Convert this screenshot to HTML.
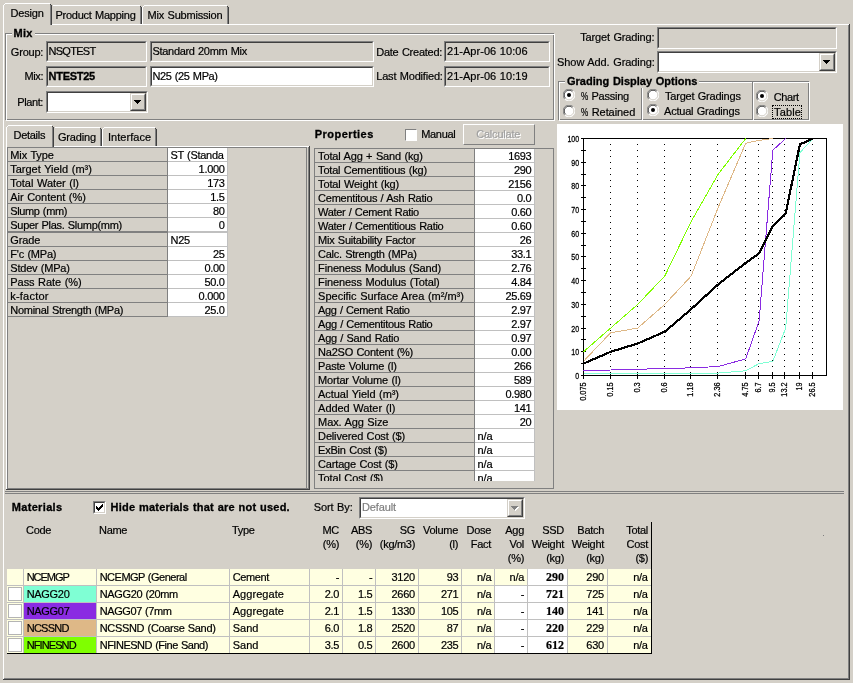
<!DOCTYPE html>
<html><head><meta charset="utf-8"><title>Mix Design</title>
<style>
html,body{margin:0;padding:0;}
body{width:853px;height:683px;overflow:hidden;background:#d4d0c8;position:relative;
 font-family:"Liberation Sans",Arial,sans-serif;font-size:11px;color:#000;}
div,svg{position:absolute;box-sizing:border-box;}
.t{-webkit-text-stroke:0.2px;white-space:nowrap;line-height:13px;height:13px;letter-spacing:-0.3px;word-spacing:0.6px;}
.b{font-weight:bold;letter-spacing:0.25px;-webkit-text-stroke:0.3px;}
.l{}
.sunk{border:1px solid;border-color:#808080 #fff #fff #808080;}
.sunk:before{content:"";position:absolute;left:0;top:0;right:0;bottom:0;border:1px solid;border-color:#404040 #d4d0c8 #d4d0c8 #404040;}
.btn{background:#d4d0c8;border:1px solid;border-color:#d4d0c8 #404040 #404040 #d4d0c8;}
.btn:before{content:"";position:absolute;left:0;top:0;right:0;bottom:0;border:1px solid;border-color:#fff #808080 #808080 #fff;}
.tab{background:#d4d0c8;}
.ser{font-family:"Liberation Serif",serif;font-weight:bold;font-size:12px;letter-spacing:0;}
.dis{color:#808080;}
svg text{stroke:#000;stroke-width:0.25px;}
#root{left:0;top:0;width:853px;height:683px;will-change:transform;}
</style></head><body><div id="root">

<div class="l" style="left:3px;top:24px;width:846px;height:1px;background:#fff;"></div>
<div class="l" style="left:3px;top:24px;width:1px;height:655px;background:#fff;"></div>
<div class="l" style="left:848px;top:25px;width:1px;height:654px;background:#808080;"></div>
<div class="l" style="left:849px;top:24px;width:1px;height:656px;background:#404040;"></div>
<div class="l" style="left:4px;top:678px;width:845px;height:1px;background:#808080;"></div>
<div class="l" style="left:3px;top:679px;width:847px;height:1px;background:#404040;"></div>
<div class="tab" style="left:52px;top:5px;width:90px;height:19px;"></div>
<div class="l" style="left:53px;top:5px;width:87px;height:1px;background:#fff;"></div>
<div class="l" style="left:140px;top:7px;width:1px;height:17px;background:#808080;"></div>
<div class="l" style="left:141px;top:7px;width:1px;height:17px;background:#404040;"></div>
<div class="l" style="left:140px;top:6px;width:1px;height:1px;background:#404040"></div>
<div class="t " style="left:55.4px;top:9px;letter-spacing:-0.24px;">Product Mapping</div>
<div class="tab" style="left:142px;top:5px;width:87px;height:19px;"></div>
<div class="l" style="left:142px;top:7px;width:1px;height:17px;background:#fff;"></div>
<div class="l" style="left:143px;top:6px;width:1px;height:1px;background:#fff"></div>
<div class="l" style="left:144px;top:5px;width:83px;height:1px;background:#fff;"></div>
<div class="l" style="left:227px;top:7px;width:1px;height:17px;background:#808080;"></div>
<div class="l" style="left:228px;top:7px;width:1px;height:17px;background:#404040;"></div>
<div class="l" style="left:227px;top:6px;width:1px;height:1px;background:#404040"></div>
<div class="t " style="left:147.6px;top:9px;letter-spacing:-0.20px;">Mix Submission</div>
<div class="tab" style="left:3px;top:3px;width:49px;height:22px;"></div>
<div class="l" style="left:3px;top:5px;width:1px;height:20px;background:#fff;"></div>
<div class="l" style="left:4px;top:4px;width:1px;height:1px;background:#fff"></div>
<div class="l" style="left:5px;top:3px;width:45px;height:1px;background:#fff;"></div>
<div class="l" style="left:50px;top:5px;width:1px;height:20px;background:#808080;"></div>
<div class="l" style="left:51px;top:5px;width:1px;height:20px;background:#404040;"></div>
<div class="l" style="left:50px;top:4px;width:1px;height:1px;background:#404040"></div>
<div class="t " style="left:10.5px;top:7px;letter-spacing:-0.16px;">Design</div>
<div class="l" style="left:5px;top:33px;width:549px;height:87px;border:1px solid #808080;box-sizing:border-box;"></div>
<div class="l" style="left:6px;top:34px;width:549px;height:87px;border:1px solid #fff;box-sizing:border-box;border-right-color:#fff;border-bottom-color:#fff;"></div>
<div class="l" style="left:12px;top:28px;width:23px;height:13px;background:#d4d0c8;"></div>
<div class="t b" style="left:13.5px;top:27px;letter-spacing:0.32px;">Mix</div>
<div class="t " style="right:809.8px;top:46px;letter-spacing:-0.21px;">Group:</div>
<div class="sunk" style="left:46px;top:41px;width:101px;height:21px;background:#d4d0c8;"></div>
<div class="t " style="left:48.5px;top:45px;letter-spacing:-0.72px;">NSQTEST</div>
<div class="sunk" style="left:150px;top:41px;width:224px;height:21px;background:#d4d0c8;"></div>
<div class="t " style="left:152.5px;top:45px;letter-spacing:-0.31px;">Standard 20mm Mix</div>
<div class="t " style="right:809.8px;top:70px;letter-spacing:-0.34px;">Mix:</div>
<div class="sunk" style="left:46px;top:66px;width:101px;height:21px;background:#d4d0c8;"></div>
<div class="t b" style="left:48.5px;top:70px;letter-spacing:-0.26px;">NTEST25</div>
<div class="sunk" style="left:150px;top:66px;width:224px;height:21px;background:#fff;"></div>
<div class="t " style="left:152.5px;top:70px;letter-spacing:-0.38px;">N25 (25 MPa)</div>
<div class="t " style="right:810px;top:96px;letter-spacing:-0.39px;">Plant:</div>
<div class="sunk" style="left:46px;top:91px;width:102px;height:22px;background:#fff;"></div>
<div class="btn" style="left:130px;top:93px;width:16px;height:18px;"></div>
<svg class="l" style="left:134px;top:100px" width="7" height="4" viewBox="0 0 7 4"><path d="M0 0h7l-3.5 4z" fill="#000" shape-rendering="crispEdges"/></svg>
<div class="t " style="left:376.2px;top:46px;letter-spacing:-0.24px;">Date Created:</div>
<div class="sunk" style="left:444px;top:41px;width:106px;height:21px;background:#d4d0c8;"></div>
<div class="t " style="left:447px;top:45px;letter-spacing:0.03px;">21-Apr-06 10:06</div>
<div class="t " style="left:376.2px;top:70px;letter-spacing:-0.18px;">Last Modified:</div>
<div class="sunk" style="left:444px;top:66px;width:106px;height:21px;background:#d4d0c8;"></div>
<div class="t " style="left:447px;top:70px;letter-spacing:0.03px;">21-Apr-06 10:19</div>
<div class="t " style="right:198.5px;top:31px;letter-spacing:-0.14px;">Target Grading:</div>
<div class="sunk" style="left:657px;top:27px;width:180px;height:22px;background:#d4d0c8;"></div>
<div class="t " style="right:198.20000000000005px;top:56px;letter-spacing:-0.07px;">Show Add. Grading:</div>
<div class="sunk" style="left:657px;top:51px;width:180px;height:22px;background:#fff;"></div>
<div class="btn" style="left:819px;top:53px;width:16px;height:18px;"></div>
<svg class="l" style="left:823px;top:60px" width="7" height="4" viewBox="0 0 7 4"><path d="M0 0h7l-3.5 4z" fill="#000" shape-rendering="crispEdges"/></svg>
<div class="l" style="left:558px;top:81px;width:251px;height:39px;border:1px solid #808080;box-sizing:border-box;"></div>
<div class="l" style="left:559px;top:82px;width:251px;height:39px;border:1px solid #fff;box-sizing:border-box;border-right-color:#fff;border-bottom-color:#fff;"></div>
<div class="l" style="left:565px;top:75px;width:134px;height:13px;background:#d4d0c8;"></div>
<div class="t b" style="left:567px;top:75px;letter-spacing:0.01px;">Grading Display Options</div>
<div class="l" style="left:641px;top:88px;width:1px;height:32px;background:#808080;"></div>
<div class="l" style="left:642px;top:88px;width:1px;height:32px;background:#fff;"></div>
<div class="l" style="left:752px;top:82px;width:1px;height:38px;background:#808080;"></div>
<div class="l" style="left:753px;top:82px;width:1px;height:38px;background:#fff;"></div>
<svg class="l" style="left:563px;top:89px" width="12" height="12" viewBox="0 0 12 12"><circle cx="6" cy="6" r="5.5" fill="#fff"/><path d="M1.8 10.2 A5.9 5.9 0 0 1 10.2 1.8" fill="none" stroke="#808080" stroke-width="1"/><path d="M2.6 9.4 A4.8 4.8 0 0 1 9.4 2.6" fill="none" stroke="#404040" stroke-width="1"/><path d="M10.2 1.8 A5.9 5.9 0 0 1 1.8 10.2" fill="none" stroke="#fff" stroke-width="1"/><path d="M9.4 2.6 A4.8 4.8 0 0 1 2.6 9.4" fill="none" stroke="#d4d0c8" stroke-width="1"/><circle cx="6" cy="6" r="2" fill="#000"/></svg>
<div class="t " style="left:580.6px;top:90px;letter-spacing:-0.22px;"><span style="display:inline-block;transform:scaleX(0.74);transform-origin:0 50%;margin-right:-2.2px">%</span> Passing</div>
<svg class="l" style="left:563px;top:105px" width="12" height="12" viewBox="0 0 12 12"><circle cx="6" cy="6" r="5.5" fill="#fff"/><path d="M1.8 10.2 A5.9 5.9 0 0 1 10.2 1.8" fill="none" stroke="#808080" stroke-width="1"/><path d="M2.6 9.4 A4.8 4.8 0 0 1 9.4 2.6" fill="none" stroke="#404040" stroke-width="1"/><path d="M10.2 1.8 A5.9 5.9 0 0 1 1.8 10.2" fill="none" stroke="#fff" stroke-width="1"/><path d="M9.4 2.6 A4.8 4.8 0 0 1 2.6 9.4" fill="none" stroke="#d4d0c8" stroke-width="1"/></svg>
<div class="t " style="left:580.6px;top:106px;letter-spacing:-0.07px;"><span style="display:inline-block;transform:scaleX(0.74);transform-origin:0 50%;margin-right:-2.2px">%</span> Retained</div>
<svg class="l" style="left:647px;top:89px" width="12" height="12" viewBox="0 0 12 12"><circle cx="6" cy="6" r="5.5" fill="#fff"/><path d="M1.8 10.2 A5.9 5.9 0 0 1 10.2 1.8" fill="none" stroke="#808080" stroke-width="1"/><path d="M2.6 9.4 A4.8 4.8 0 0 1 9.4 2.6" fill="none" stroke="#404040" stroke-width="1"/><path d="M10.2 1.8 A5.9 5.9 0 0 1 1.8 10.2" fill="none" stroke="#fff" stroke-width="1"/><path d="M9.4 2.6 A4.8 4.8 0 0 1 2.6 9.4" fill="none" stroke="#d4d0c8" stroke-width="1"/></svg>
<div class="t " style="left:665px;top:90px;letter-spacing:-0.21px;">Target Gradings</div>
<svg class="l" style="left:647px;top:104px" width="12" height="12" viewBox="0 0 12 12"><circle cx="6" cy="6" r="5.5" fill="#fff"/><path d="M1.8 10.2 A5.9 5.9 0 0 1 10.2 1.8" fill="none" stroke="#808080" stroke-width="1"/><path d="M2.6 9.4 A4.8 4.8 0 0 1 9.4 2.6" fill="none" stroke="#404040" stroke-width="1"/><path d="M10.2 1.8 A5.9 5.9 0 0 1 1.8 10.2" fill="none" stroke="#fff" stroke-width="1"/><path d="M9.4 2.6 A4.8 4.8 0 0 1 2.6 9.4" fill="none" stroke="#d4d0c8" stroke-width="1"/><circle cx="6" cy="6" r="2" fill="#000"/></svg>
<div class="t " style="left:664px;top:105px;letter-spacing:-0.21px;">Actual Gradings</div>
<svg class="l" style="left:756px;top:90px" width="12" height="12" viewBox="0 0 12 12"><circle cx="6" cy="6" r="5.5" fill="#fff"/><path d="M1.8 10.2 A5.9 5.9 0 0 1 10.2 1.8" fill="none" stroke="#808080" stroke-width="1"/><path d="M2.6 9.4 A4.8 4.8 0 0 1 9.4 2.6" fill="none" stroke="#404040" stroke-width="1"/><path d="M10.2 1.8 A5.9 5.9 0 0 1 1.8 10.2" fill="none" stroke="#fff" stroke-width="1"/><path d="M9.4 2.6 A4.8 4.8 0 0 1 2.6 9.4" fill="none" stroke="#d4d0c8" stroke-width="1"/><circle cx="6" cy="6" r="2" fill="#000"/></svg>
<div class="t " style="left:773.7px;top:91px;letter-spacing:-0.36px;">Chart</div>
<svg class="l" style="left:756px;top:105px" width="12" height="12" viewBox="0 0 12 12"><circle cx="6" cy="6" r="5.5" fill="#fff"/><path d="M1.8 10.2 A5.9 5.9 0 0 1 10.2 1.8" fill="none" stroke="#808080" stroke-width="1"/><path d="M2.6 9.4 A4.8 4.8 0 0 1 9.4 2.6" fill="none" stroke="#404040" stroke-width="1"/><path d="M10.2 1.8 A5.9 5.9 0 0 1 1.8 10.2" fill="none" stroke="#fff" stroke-width="1"/><path d="M9.4 2.6 A4.8 4.8 0 0 1 2.6 9.4" fill="none" stroke="#d4d0c8" stroke-width="1"/></svg>
<div class="t " style="left:774px;top:106px;letter-spacing:0.16px;">Table</div>
<div class="l" style="left:772px;top:105px;width:30px;height:14px;border:1px dotted #000;"></div>
<div class="tab" style="left:54px;top:127px;width:48px;height:19px;"></div>
<div class="l" style="left:55px;top:127px;width:45px;height:1px;background:#fff;"></div>
<div class="l" style="left:100px;top:129px;width:1px;height:17px;background:#808080;"></div>
<div class="l" style="left:101px;top:129px;width:1px;height:17px;background:#404040;"></div>
<div class="l" style="left:100px;top:128px;width:1px;height:1px;background:#404040"></div>
<div class="t " style="left:58px;top:131px;letter-spacing:-0.19px;">Grading</div>
<div class="tab" style="left:102px;top:127px;width:55px;height:19px;"></div>
<div class="l" style="left:102px;top:129px;width:1px;height:17px;background:#fff;"></div>
<div class="l" style="left:103px;top:128px;width:1px;height:1px;background:#fff"></div>
<div class="l" style="left:104px;top:127px;width:51px;height:1px;background:#fff;"></div>
<div class="l" style="left:155px;top:129px;width:1px;height:17px;background:#808080;"></div>
<div class="l" style="left:156px;top:129px;width:1px;height:17px;background:#404040;"></div>
<div class="l" style="left:155px;top:128px;width:1px;height:1px;background:#404040"></div>
<div class="t " style="left:108px;top:131px;letter-spacing:0.03px;">Interface</div>
<div class="l" style="left:6px;top:146px;width:303px;height:1px;background:#fff;"></div>
<div class="l" style="left:6px;top:146px;width:1px;height:343px;background:#fff;"></div>
<div class="l" style="left:308px;top:147px;width:1px;height:342px;background:#808080;"></div>
<div class="l" style="left:309px;top:146px;width:1px;height:344px;background:#404040;"></div>
<div class="l" style="left:7px;top:488px;width:302px;height:1px;background:#808080;"></div>
<div class="l" style="left:6px;top:489px;width:304px;height:1px;background:#404040;"></div>
<div class="tab" style="left:6px;top:125px;width:48px;height:22px;"></div>
<div class="l" style="left:6px;top:127px;width:1px;height:20px;background:#fff;"></div>
<div class="l" style="left:7px;top:126px;width:1px;height:1px;background:#fff"></div>
<div class="l" style="left:8px;top:125px;width:44px;height:1px;background:#fff;"></div>
<div class="l" style="left:52px;top:127px;width:1px;height:20px;background:#808080;"></div>
<div class="l" style="left:53px;top:127px;width:1px;height:20px;background:#404040;"></div>
<div class="l" style="left:52px;top:126px;width:1px;height:1px;background:#404040"></div>
<div class="t " style="left:13.5px;top:129px;letter-spacing:-0.28px;">Details</div>
<div class="l" style="left:7px;top:147px;width:300px;height:342px;border:1px solid #808080;"></div>
<div class="l" style="left:8px;top:148px;width:220px;height:169px;background:#808080;"></div>
<div class="l" style="left:8px;top:148px;width:159px;height:13px;background:#d4d0c8;"></div>
<div class="l" style="left:168px;top:148px;width:59px;height:13px;background:#fff;"></div>
<div class="l" style="left:168px;top:161px;width:59px;height:1px;background:#c0c0c0;"></div>
<div class="t " style="left:10.3px;top:149px;letter-spacing:-0.12px;">Mix Type</div>
<div class="t " style="left:170.5px;top:149px;width:56px;overflow:hidden;">ST (Standa</div>
<div class="l" style="left:8px;top:162px;width:159px;height:13px;background:#d4d0c8;"></div>
<div class="l" style="left:168px;top:162px;width:59px;height:13px;background:#fff;"></div>
<div class="l" style="left:168px;top:175px;width:59px;height:1px;background:#c0c0c0;"></div>
<div class="t " style="left:10.3px;top:163px;letter-spacing:-0.02px;">Target Yield (m³)</div>
<div class="t " style="right:628.4px;top:163px;">1.000</div>
<div class="l" style="left:8px;top:176px;width:159px;height:13px;background:#d4d0c8;"></div>
<div class="l" style="left:168px;top:176px;width:59px;height:13px;background:#fff;"></div>
<div class="l" style="left:168px;top:189px;width:59px;height:1px;background:#c0c0c0;"></div>
<div class="t " style="left:10.3px;top:177px;letter-spacing:-0.04px;">Total Water (l)</div>
<div class="t " style="right:628.4px;top:177px;">173</div>
<div class="l" style="left:8px;top:190px;width:159px;height:13px;background:#d4d0c8;"></div>
<div class="l" style="left:168px;top:190px;width:59px;height:13px;background:#fff;"></div>
<div class="l" style="left:168px;top:203px;width:59px;height:1px;background:#c0c0c0;"></div>
<div class="t " style="left:10.3px;top:191px;letter-spacing:-0.06px;">Air Content (%)</div>
<div class="t " style="right:628.4px;top:191px;">1.5</div>
<div class="l" style="left:8px;top:204px;width:159px;height:13px;background:#d4d0c8;"></div>
<div class="l" style="left:168px;top:204px;width:59px;height:13px;background:#fff;"></div>
<div class="l" style="left:168px;top:217px;width:59px;height:1px;background:#c0c0c0;"></div>
<div class="t " style="left:10.3px;top:205px;letter-spacing:-0.38px;">Slump (mm)</div>
<div class="t " style="right:628.4px;top:205px;">80</div>
<div class="l" style="left:8px;top:218px;width:159px;height:13px;background:#d4d0c8;"></div>
<div class="l" style="left:168px;top:218px;width:59px;height:13px;background:#fff;"></div>
<div class="l" style="left:168px;top:231px;width:59px;height:1px;background:#c0c0c0;"></div>
<div class="l" style="left:168px;top:232px;width:59px;height:1px;background:#c0c0c0;"></div>
<div class="t " style="left:10.3px;top:219px;letter-spacing:-0.30px;">Super Plas. Slump(mm)</div>
<div class="t " style="right:628.4px;top:219px;">0</div>
<div class="l" style="left:8px;top:233px;width:159px;height:13px;background:#d4d0c8;"></div>
<div class="l" style="left:168px;top:233px;width:59px;height:13px;background:#fff;"></div>
<div class="l" style="left:168px;top:246px;width:59px;height:1px;background:#c0c0c0;"></div>
<div class="t " style="left:10.3px;top:234px;letter-spacing:-0.12px;">Grade</div>
<div class="t " style="left:170.5px;top:234px;width:56px;overflow:hidden;">N25</div>
<div class="l" style="left:8px;top:247px;width:159px;height:13px;background:#d4d0c8;"></div>
<div class="l" style="left:168px;top:247px;width:59px;height:13px;background:#fff;"></div>
<div class="l" style="left:168px;top:260px;width:59px;height:1px;background:#c0c0c0;"></div>
<div class="t " style="left:10.3px;top:248px;letter-spacing:-0.22px;">F'c (MPa)</div>
<div class="t " style="right:628.4px;top:248px;">25</div>
<div class="l" style="left:8px;top:261px;width:159px;height:13px;background:#d4d0c8;"></div>
<div class="l" style="left:168px;top:261px;width:59px;height:13px;background:#fff;"></div>
<div class="l" style="left:168px;top:274px;width:59px;height:1px;background:#c0c0c0;"></div>
<div class="t " style="left:10.3px;top:262px;letter-spacing:-0.21px;">Stdev (MPa)</div>
<div class="t " style="right:628.4px;top:262px;">0.00</div>
<div class="l" style="left:8px;top:275px;width:159px;height:13px;background:#d4d0c8;"></div>
<div class="l" style="left:168px;top:275px;width:59px;height:13px;background:#fff;"></div>
<div class="l" style="left:168px;top:288px;width:59px;height:1px;background:#c0c0c0;"></div>
<div class="t " style="left:10.3px;top:276px;letter-spacing:-0.06px;">Pass Rate (%)</div>
<div class="t " style="right:628.4px;top:276px;">50.0</div>
<div class="l" style="left:8px;top:289px;width:159px;height:13px;background:#d4d0c8;"></div>
<div class="l" style="left:168px;top:289px;width:59px;height:13px;background:#fff;"></div>
<div class="l" style="left:168px;top:302px;width:59px;height:1px;background:#c0c0c0;"></div>
<div class="t " style="left:10.3px;top:290px;letter-spacing:0.20px;">k-factor</div>
<div class="t " style="right:628.4px;top:290px;">0.000</div>
<div class="l" style="left:8px;top:303px;width:159px;height:13px;background:#d4d0c8;"></div>
<div class="l" style="left:168px;top:303px;width:59px;height:13px;background:#fff;"></div>
<div class="l" style="left:168px;top:316px;width:59px;height:1px;background:#c0c0c0;"></div>
<div class="t " style="left:10.3px;top:304px;letter-spacing:-0.29px;">Nominal Strength (MPa)</div>
<div class="t " style="right:628.4px;top:304px;">25.0</div>
<div class="l" style="left:227px;top:148px;width:1px;height:169px;background:#c0c0c0;"></div>
<div class="t b" style="left:314.8px;top:128px;letter-spacing:0.45px;">Properties</div>
<div class="l" style="left:405px;top:129px;width:12px;height:12px;background:#fff;border:1px solid;border-color:#808080 #fff #fff #808080;"></div>
<div class="t " style="left:421.2px;top:128px;letter-spacing:-0.30px;">Manual</div>
<div class="l" style="left:463px;top:124px;width:72px;height:21px;border:1px solid;border-color:#fff #808080 #808080 #fff;"></div>
<div class="t " style="left:477.2px;top:129px;letter-spacing:-0.20px;color:#fff;">Calculate</div>
<div class="t " style="left:476.2px;top:128px;letter-spacing:-0.20px;color:#a0a0a0;">Calculate</div>
<div class="l" style="left:314px;top:148px;width:240px;height:341px;border:1px solid #808080;"></div>
<div class="l" style="left:315px;top:149px;width:220px;height:332px;overflow:hidden;">
<div class="l" style="left:0px;top:0px;width:220px;height:336px;background:#808080;"></div>
<div class="l" style="left:0px;top:0px;width:159px;height:13px;background:#d4d0c8;"></div>
<div class="l" style="left:160px;top:0px;width:59px;height:13px;background:#fff;"></div>
<div class="l" style="left:160px;top:13px;width:59px;height:1px;background:#c0c0c0;"></div>
<div class="t " style="left:3.1px;top:1px;letter-spacing:-0.15px;">Total Agg + Sand (kg)</div>
<div class="t" style="right:3.6px;top:1px;">1693</div>
<div class="l" style="left:0px;top:14px;width:159px;height:13px;background:#d4d0c8;"></div>
<div class="l" style="left:160px;top:14px;width:59px;height:13px;background:#fff;"></div>
<div class="l" style="left:160px;top:27px;width:59px;height:1px;background:#c0c0c0;"></div>
<div class="t " style="left:3.1px;top:15px;letter-spacing:-0.21px;">Total Cementitious (kg)</div>
<div class="t" style="right:3.6px;top:15px;">290</div>
<div class="l" style="left:0px;top:28px;width:159px;height:13px;background:#d4d0c8;"></div>
<div class="l" style="left:160px;top:28px;width:59px;height:13px;background:#fff;"></div>
<div class="l" style="left:160px;top:41px;width:59px;height:1px;background:#c0c0c0;"></div>
<div class="t " style="left:3.1px;top:29px;letter-spacing:-0.15px;">Total Weight (kg)</div>
<div class="t" style="right:3.6px;top:29px;">2156</div>
<div class="l" style="left:0px;top:42px;width:159px;height:13px;background:#d4d0c8;"></div>
<div class="l" style="left:160px;top:42px;width:59px;height:13px;background:#fff;"></div>
<div class="l" style="left:160px;top:55px;width:59px;height:1px;background:#c0c0c0;"></div>
<div class="t " style="left:3.1px;top:43px;letter-spacing:-0.24px;">Cementitous / Ash Ratio</div>
<div class="t" style="right:3.6px;top:43px;">0.0</div>
<div class="l" style="left:0px;top:56px;width:159px;height:13px;background:#d4d0c8;"></div>
<div class="l" style="left:160px;top:56px;width:59px;height:13px;background:#fff;"></div>
<div class="l" style="left:160px;top:69px;width:59px;height:1px;background:#c0c0c0;"></div>
<div class="t " style="left:3.1px;top:57px;letter-spacing:-0.32px;">Water / Cement Ratio</div>
<div class="t" style="right:3.6px;top:57px;">0.60</div>
<div class="l" style="left:0px;top:70px;width:159px;height:13px;background:#d4d0c8;"></div>
<div class="l" style="left:160px;top:70px;width:59px;height:13px;background:#fff;"></div>
<div class="l" style="left:160px;top:83px;width:59px;height:1px;background:#c0c0c0;"></div>
<div class="t " style="left:3.1px;top:71px;letter-spacing:-0.29px;">Water / Cementitious Ratio</div>
<div class="t" style="right:3.6px;top:71px;">0.60</div>
<div class="l" style="left:0px;top:84px;width:159px;height:13px;background:#d4d0c8;"></div>
<div class="l" style="left:160px;top:84px;width:59px;height:13px;background:#fff;"></div>
<div class="l" style="left:160px;top:97px;width:59px;height:1px;background:#c0c0c0;"></div>
<div class="t " style="left:3.1px;top:85px;letter-spacing:-0.26px;">Mix Suitability Factor</div>
<div class="t" style="right:3.6px;top:85px;">26</div>
<div class="l" style="left:0px;top:98px;width:159px;height:13px;background:#d4d0c8;"></div>
<div class="l" style="left:160px;top:98px;width:59px;height:13px;background:#fff;"></div>
<div class="l" style="left:160px;top:111px;width:59px;height:1px;background:#c0c0c0;"></div>
<div class="t " style="left:3.1px;top:99px;letter-spacing:-0.27px;">Calc. Strength (MPa)</div>
<div class="t" style="right:3.6px;top:99px;">33.1</div>
<div class="l" style="left:0px;top:112px;width:159px;height:13px;background:#d4d0c8;"></div>
<div class="l" style="left:160px;top:112px;width:59px;height:13px;background:#fff;"></div>
<div class="l" style="left:160px;top:125px;width:59px;height:1px;background:#c0c0c0;"></div>
<div class="t " style="left:3.1px;top:113px;letter-spacing:-0.16px;">Fineness Modulus (Sand)</div>
<div class="t" style="right:3.6px;top:113px;">2.76</div>
<div class="l" style="left:0px;top:126px;width:159px;height:13px;background:#d4d0c8;"></div>
<div class="l" style="left:160px;top:126px;width:59px;height:13px;background:#fff;"></div>
<div class="l" style="left:160px;top:139px;width:59px;height:1px;background:#c0c0c0;"></div>
<div class="t " style="left:3.1px;top:127px;letter-spacing:-0.11px;">Fineness Modulus (Total)</div>
<div class="t" style="right:3.6px;top:127px;">4.84</div>
<div class="l" style="left:0px;top:140px;width:159px;height:13px;background:#d4d0c8;"></div>
<div class="l" style="left:160px;top:140px;width:59px;height:13px;background:#fff;"></div>
<div class="l" style="left:160px;top:153px;width:59px;height:1px;background:#c0c0c0;"></div>
<div class="t " style="left:3.1px;top:141px;letter-spacing:-0.01px;">Specific Surface Area (m²/m³)</div>
<div class="t" style="right:3.6px;top:141px;">25.69</div>
<div class="l" style="left:0px;top:154px;width:159px;height:13px;background:#d4d0c8;"></div>
<div class="l" style="left:160px;top:154px;width:59px;height:13px;background:#fff;"></div>
<div class="l" style="left:160px;top:167px;width:59px;height:1px;background:#c0c0c0;"></div>
<div class="t " style="left:3.1px;top:155px;letter-spacing:-0.35px;">Agg / Cement Ratio</div>
<div class="t" style="right:3.6px;top:155px;">2.97</div>
<div class="l" style="left:0px;top:168px;width:159px;height:13px;background:#d4d0c8;"></div>
<div class="l" style="left:160px;top:168px;width:59px;height:13px;background:#fff;"></div>
<div class="l" style="left:160px;top:181px;width:59px;height:1px;background:#c0c0c0;"></div>
<div class="t " style="left:3.1px;top:169px;letter-spacing:-0.29px;">Agg / Cementitous Ratio</div>
<div class="t" style="right:3.6px;top:169px;">2.97</div>
<div class="l" style="left:0px;top:182px;width:159px;height:13px;background:#d4d0c8;"></div>
<div class="l" style="left:160px;top:182px;width:59px;height:13px;background:#fff;"></div>
<div class="l" style="left:160px;top:195px;width:59px;height:1px;background:#c0c0c0;"></div>
<div class="t " style="left:3.1px;top:183px;letter-spacing:-0.25px;">Agg / Sand Ratio</div>
<div class="t" style="right:3.6px;top:183px;">0.97</div>
<div class="l" style="left:0px;top:196px;width:159px;height:13px;background:#d4d0c8;"></div>
<div class="l" style="left:160px;top:196px;width:59px;height:13px;background:#fff;"></div>
<div class="l" style="left:160px;top:209px;width:59px;height:1px;background:#c0c0c0;"></div>
<div class="t " style="left:3.1px;top:197px;letter-spacing:-0.24px;">Na2SO Content (%)</div>
<div class="t" style="right:3.6px;top:197px;">0.00</div>
<div class="l" style="left:0px;top:210px;width:159px;height:13px;background:#d4d0c8;"></div>
<div class="l" style="left:160px;top:210px;width:59px;height:13px;background:#fff;"></div>
<div class="l" style="left:160px;top:223px;width:59px;height:1px;background:#c0c0c0;"></div>
<div class="t " style="left:3.1px;top:211px;letter-spacing:-0.20px;">Paste Volume (l)</div>
<div class="t" style="right:3.6px;top:211px;">266</div>
<div class="l" style="left:0px;top:224px;width:159px;height:13px;background:#d4d0c8;"></div>
<div class="l" style="left:160px;top:224px;width:59px;height:13px;background:#fff;"></div>
<div class="l" style="left:160px;top:237px;width:59px;height:1px;background:#c0c0c0;"></div>
<div class="t " style="left:3.1px;top:225px;letter-spacing:-0.17px;">Mortar Volume (l)</div>
<div class="t" style="right:3.6px;top:225px;">589</div>
<div class="l" style="left:0px;top:238px;width:159px;height:13px;background:#d4d0c8;"></div>
<div class="l" style="left:160px;top:238px;width:59px;height:13px;background:#fff;"></div>
<div class="l" style="left:160px;top:251px;width:59px;height:1px;background:#c0c0c0;"></div>
<div class="t " style="left:3.1px;top:239px;letter-spacing:-0.06px;">Actual Yield (m³)</div>
<div class="t" style="right:3.6px;top:239px;">0.980</div>
<div class="l" style="left:0px;top:252px;width:159px;height:13px;background:#d4d0c8;"></div>
<div class="l" style="left:160px;top:252px;width:59px;height:13px;background:#fff;"></div>
<div class="l" style="left:160px;top:265px;width:59px;height:1px;background:#c0c0c0;"></div>
<div class="t " style="left:3.1px;top:253px;letter-spacing:-0.04px;">Added Water (l)</div>
<div class="t" style="right:3.6px;top:253px;">141</div>
<div class="l" style="left:0px;top:266px;width:159px;height:13px;background:#d4d0c8;"></div>
<div class="l" style="left:160px;top:266px;width:59px;height:13px;background:#fff;"></div>
<div class="l" style="left:160px;top:279px;width:59px;height:1px;background:#c0c0c0;"></div>
<div class="t " style="left:3.1px;top:267px;letter-spacing:-0.10px;">Max. Agg Size</div>
<div class="t" style="right:3.6px;top:267px;">20</div>
<div class="l" style="left:0px;top:280px;width:159px;height:13px;background:#d4d0c8;"></div>
<div class="l" style="left:160px;top:280px;width:59px;height:13px;background:#fff;"></div>
<div class="l" style="left:160px;top:293px;width:59px;height:1px;background:#c0c0c0;"></div>
<div class="t " style="left:3.1px;top:281px;letter-spacing:-0.16px;">Delivered Cost ($)</div>
<div class="t " style="left:162.5px;top:281px;letter-spacing:-0.07px;">n/a</div>
<div class="l" style="left:0px;top:294px;width:159px;height:13px;background:#d4d0c8;"></div>
<div class="l" style="left:160px;top:294px;width:59px;height:13px;background:#fff;"></div>
<div class="l" style="left:160px;top:307px;width:59px;height:1px;background:#c0c0c0;"></div>
<div class="t " style="left:3.1px;top:295px;letter-spacing:-0.22px;">ExBin Cost ($)</div>
<div class="t " style="left:162.5px;top:295px;letter-spacing:-0.07px;">n/a</div>
<div class="l" style="left:0px;top:308px;width:159px;height:13px;background:#d4d0c8;"></div>
<div class="l" style="left:160px;top:308px;width:59px;height:13px;background:#fff;"></div>
<div class="l" style="left:160px;top:321px;width:59px;height:1px;background:#c0c0c0;"></div>
<div class="t " style="left:3.1px;top:309px;letter-spacing:-0.18px;">Cartage Cost ($)</div>
<div class="t " style="left:162.5px;top:309px;letter-spacing:-0.07px;">n/a</div>
<div class="l" style="left:0px;top:322px;width:159px;height:13px;background:#d4d0c8;"></div>
<div class="l" style="left:160px;top:322px;width:59px;height:13px;background:#fff;"></div>
<div class="l" style="left:160px;top:335px;width:59px;height:1px;background:#c0c0c0;"></div>
<div class="t " style="left:3.1px;top:323px;letter-spacing:-0.11px;">Total Cost ($)</div>
<div class="t " style="left:162.5px;top:323px;letter-spacing:-0.07px;">n/a</div>
<div class="l" style="left:219px;top:0px;width:1px;height:336px;background:#c0c0c0;"></div>
</div>
<div class="l" style="left:557px;top:124px;width:286px;height:286px;background:#fff;"></div>
<svg class="l" style="left:0;top:0" width="853" height="683" viewBox="0 0 853 683" font-family="Liberation Sans,Arial,sans-serif" font-size="8.4"><line x1="610.5" y1="144" x2="610.5" y2="375.5" stroke="#000" stroke-width="1" stroke-dasharray="1 5" shape-rendering="crispEdges"/><line x1="637.5" y1="144" x2="637.5" y2="375.5" stroke="#000" stroke-width="1" stroke-dasharray="1 5" shape-rendering="crispEdges"/><line x1="664.5" y1="144" x2="664.5" y2="375.5" stroke="#000" stroke-width="1" stroke-dasharray="1 5" shape-rendering="crispEdges"/><line x1="690.5" y1="144" x2="690.5" y2="375.5" stroke="#000" stroke-width="1" stroke-dasharray="1 5" shape-rendering="crispEdges"/><line x1="717.5" y1="144" x2="717.5" y2="375.5" stroke="#000" stroke-width="1" stroke-dasharray="1 5" shape-rendering="crispEdges"/><line x1="745.5" y1="144" x2="745.5" y2="375.5" stroke="#000" stroke-width="1" stroke-dasharray="1 5" shape-rendering="crispEdges"/><line x1="758.5" y1="144" x2="758.5" y2="375.5" stroke="#000" stroke-width="1" stroke-dasharray="1 5" shape-rendering="crispEdges"/><line x1="772.5" y1="144" x2="772.5" y2="375.5" stroke="#000" stroke-width="1" stroke-dasharray="1 5" shape-rendering="crispEdges"/><line x1="784.5" y1="144" x2="784.5" y2="375.5" stroke="#000" stroke-width="1" stroke-dasharray="1 5" shape-rendering="crispEdges"/><line x1="799.5" y1="144" x2="799.5" y2="375.5" stroke="#000" stroke-width="1" stroke-dasharray="1 5" shape-rendering="crispEdges"/><line x1="812.5" y1="144" x2="812.5" y2="375.5" stroke="#000" stroke-width="1" stroke-dasharray="1 5" shape-rendering="crispEdges"/><rect x="583.5" y="138.5" width="243.0" height="237.0" fill="none" stroke="#000" stroke-width="1" shape-rendering="crispEdges"/><line x1="580.5" y1="375.5" x2="585.5" y2="375.5" stroke="#000" shape-rendering="crispEdges"/><text transform="translate(579.2,378.7) scale(0.84,1)" text-anchor="end">0</text><line x1="580.5" y1="363.5" x2="585.5" y2="363.5" stroke="#000" shape-rendering="crispEdges"/><line x1="580.5" y1="351.5" x2="585.5" y2="351.5" stroke="#000" shape-rendering="crispEdges"/><text transform="translate(579.2,354.7) scale(0.84,1)" text-anchor="end">10</text><line x1="580.5" y1="339.5" x2="585.5" y2="339.5" stroke="#000" shape-rendering="crispEdges"/><line x1="580.5" y1="328.5" x2="585.5" y2="328.5" stroke="#000" shape-rendering="crispEdges"/><text transform="translate(579.2,331.7) scale(0.84,1)" text-anchor="end">20</text><line x1="580.5" y1="316.5" x2="585.5" y2="316.5" stroke="#000" shape-rendering="crispEdges"/><line x1="580.5" y1="304.5" x2="585.5" y2="304.5" stroke="#000" shape-rendering="crispEdges"/><text transform="translate(579.2,307.7) scale(0.84,1)" text-anchor="end">30</text><line x1="580.5" y1="292.5" x2="585.5" y2="292.5" stroke="#000" shape-rendering="crispEdges"/><line x1="580.5" y1="280.5" x2="585.5" y2="280.5" stroke="#000" shape-rendering="crispEdges"/><text transform="translate(579.2,283.7) scale(0.84,1)" text-anchor="end">40</text><line x1="580.5" y1="268.5" x2="585.5" y2="268.5" stroke="#000" shape-rendering="crispEdges"/><line x1="580.5" y1="256.5" x2="585.5" y2="256.5" stroke="#000" shape-rendering="crispEdges"/><text transform="translate(579.2,259.7) scale(0.84,1)" text-anchor="end">50</text><line x1="580.5" y1="245.5" x2="585.5" y2="245.5" stroke="#000" shape-rendering="crispEdges"/><line x1="580.5" y1="233.5" x2="585.5" y2="233.5" stroke="#000" shape-rendering="crispEdges"/><text transform="translate(579.2,236.7) scale(0.84,1)" text-anchor="end">60</text><line x1="580.5" y1="221.5" x2="585.5" y2="221.5" stroke="#000" shape-rendering="crispEdges"/><line x1="580.5" y1="209.5" x2="585.5" y2="209.5" stroke="#000" shape-rendering="crispEdges"/><text transform="translate(579.2,212.7) scale(0.84,1)" text-anchor="end">70</text><line x1="580.5" y1="197.5" x2="585.5" y2="197.5" stroke="#000" shape-rendering="crispEdges"/><line x1="580.5" y1="185.5" x2="585.5" y2="185.5" stroke="#000" shape-rendering="crispEdges"/><text transform="translate(579.2,188.7) scale(0.84,1)" text-anchor="end">80</text><line x1="580.5" y1="174.5" x2="585.5" y2="174.5" stroke="#000" shape-rendering="crispEdges"/><line x1="580.5" y1="162.5" x2="585.5" y2="162.5" stroke="#000" shape-rendering="crispEdges"/><text transform="translate(579.2,165.7) scale(0.84,1)" text-anchor="end">90</text><line x1="580.5" y1="150.5" x2="585.5" y2="150.5" stroke="#000" shape-rendering="crispEdges"/><line x1="580.5" y1="138.5" x2="585.5" y2="138.5" stroke="#000" shape-rendering="crispEdges"/><text transform="translate(579.2,141.7) scale(0.84,1)" text-anchor="end">100</text><line x1="583.5" y1="372.5" x2="583.5" y2="378.5" stroke="#000" shape-rendering="crispEdges"/><text transform="translate(586.4,382.3) rotate(-90) scale(0.88,1)" text-anchor="end">0.075</text><line x1="610.5" y1="372.5" x2="610.5" y2="378.5" stroke="#000" shape-rendering="crispEdges"/><text transform="translate(613.4,382.3) rotate(-90) scale(0.88,1)" text-anchor="end">0.15</text><line x1="637.5" y1="372.5" x2="637.5" y2="378.5" stroke="#000" shape-rendering="crispEdges"/><text transform="translate(640.4,382.3) rotate(-90) scale(0.88,1)" text-anchor="end">0.3</text><line x1="664.5" y1="372.5" x2="664.5" y2="378.5" stroke="#000" shape-rendering="crispEdges"/><text transform="translate(667.4,382.3) rotate(-90) scale(0.88,1)" text-anchor="end">0.6</text><line x1="690.5" y1="372.5" x2="690.5" y2="378.5" stroke="#000" shape-rendering="crispEdges"/><text transform="translate(693.4,382.3) rotate(-90) scale(0.88,1)" text-anchor="end">1.18</text><line x1="717.5" y1="372.5" x2="717.5" y2="378.5" stroke="#000" shape-rendering="crispEdges"/><text transform="translate(720.4,382.3) rotate(-90) scale(0.88,1)" text-anchor="end">2.36</text><line x1="745.5" y1="372.5" x2="745.5" y2="378.5" stroke="#000" shape-rendering="crispEdges"/><text transform="translate(748.4,382.3) rotate(-90) scale(0.88,1)" text-anchor="end">4.75</text><line x1="758.5" y1="372.5" x2="758.5" y2="378.5" stroke="#000" shape-rendering="crispEdges"/><text transform="translate(761.4,382.3) rotate(-90) scale(0.88,1)" text-anchor="end">6.7</text><line x1="772.5" y1="372.5" x2="772.5" y2="378.5" stroke="#000" shape-rendering="crispEdges"/><text transform="translate(775.4,382.3) rotate(-90) scale(0.88,1)" text-anchor="end">9.5</text><line x1="784.5" y1="372.5" x2="784.5" y2="378.5" stroke="#000" shape-rendering="crispEdges"/><text transform="translate(787.4,382.3) rotate(-90) scale(0.88,1)" text-anchor="end">13.2</text><line x1="799.5" y1="372.5" x2="799.5" y2="378.5" stroke="#000" shape-rendering="crispEdges"/><text transform="translate(802.4,382.3) rotate(-90) scale(0.88,1)" text-anchor="end">19</text><line x1="812.5" y1="372.5" x2="812.5" y2="378.5" stroke="#000" shape-rendering="crispEdges"/><text transform="translate(815.4,382.3) rotate(-90) scale(0.88,1)" text-anchor="end">26.5</text><polyline points="583.5,351.8 610.6,328.1 637.7,304.4 664.8,276.0 691.2,221.4 718.3,174.1 745.7,138.5" fill="none" stroke="#7fff00" stroke-width="1" stroke-linejoin="round" shape-rendering="crispEdges"/><polyline points="583.5,361.3 610.6,332.8 637.7,328.1 664.8,304.4 691.2,276.0 718.3,207.2 745.7,143.2 759.1,140.4 772.8,138.5" fill="none" stroke="#deb887" stroke-width="1" stroke-linejoin="round" shape-rendering="crispEdges"/><polyline points="583.5,370.8 610.6,370.0 637.7,369.3 664.8,368.4 691.2,367.9 718.3,366.5 745.7,358.9 759.1,321.0 772.8,150.3 785.7,138.5" fill="none" stroke="#8a2be2" stroke-width="1" stroke-linejoin="round" shape-rendering="crispEdges"/><polyline points="583.5,373.1 610.6,373.1 637.7,373.1 664.8,373.1 691.2,373.1 718.3,373.1 745.7,370.8 759.1,363.6 772.8,361.3 785.7,328.1 799.9,152.7 812.9,138.5" fill="none" stroke="#7fffd4" stroke-width="1" stroke-linejoin="round" shape-rendering="crispEdges"/><polyline points="583.5,363.6 610.6,351.8 637.7,343.5 664.8,331.7 691.2,309.1 718.3,284.3 745.7,262.9 759.1,253.4 772.8,226.2 785.7,213.2 799.9,144.4 812.9,138.5" fill="none" stroke="#000000" stroke-width="2.2" stroke-linejoin="round" shape-rendering="crispEdges"/></svg>
<div class="l" style="left:5px;top:491px;width:839px;height:1px;background:#808080;"></div>
<div class="l" style="left:5px;top:493px;width:839px;height:1px;background:#808080;"></div>
<div class="t b" style="left:11.7px;top:501px;letter-spacing:0.34px;">Materials</div>
<div class="sunk" style="left:93px;top:501px;width:13px;height:13px;background:#fff;"></div>
<svg class="l" style="left:96px;top:504px" width="7" height="7" viewBox="0 0 7 7"><path d="M0 2v3l2 2l5-5v-3l-5 5z" fill="#000" shape-rendering="crispEdges"/></svg>
<div class="t b" style="left:110.6px;top:501px;letter-spacing:0.19px;">Hide materials that are not used.</div>
<div class="t " style="left:313.7px;top:501px;letter-spacing:-0.10px;">Sort By:</div>
<div class="sunk" style="left:359px;top:497px;width:166px;height:22px;background:#fff;"></div>
<div class="t dis" style="left:362px;top:501px;letter-spacing:-0.14px;">Default</div>
<div class="btn" style="left:507px;top:499px;width:16px;height:18px;"></div>
<svg class="l" style="left:512px;top:507px" width="7" height="4" viewBox="0 0 7 4"><path d="M0 0h7l-3.5 4z" fill="#fff" shape-rendering="crispEdges"/></svg>
<svg class="l" style="left:511px;top:506px" width="7" height="4" viewBox="0 0 7 4"><path d="M0 0h7l-3.5 4z" fill="#808080" shape-rendering="crispEdges"/></svg>
<div class="t " style="left:26px;top:524px;">Code</div>
<div class="t " style="left:99px;top:524px;">Name</div>
<div class="t " style="left:232px;top:524px;">Type</div>
<div class="t " style="right:514px;top:524px;">MC</div>
<div class="t " style="right:514px;top:538px;">(%)</div>
<div class="t " style="right:481px;top:524px;">ABS</div>
<div class="t " style="right:481px;top:538px;">(%)</div>
<div class="t " style="right:438px;top:524px;">SG</div>
<div class="t " style="right:438px;top:538px;">(kg/m3)</div>
<div class="t " style="right:395px;top:524px;">Volume</div>
<div class="t " style="right:395px;top:538px;">(l)</div>
<div class="t " style="right:362px;top:524px;">Dose</div>
<div class="t " style="right:362px;top:538px;">Fact</div>
<div class="t " style="right:329px;top:524px;">Agg</div>
<div class="t " style="right:329px;top:538px;">Vol</div>
<div class="t " style="right:329px;top:552px;">(%)</div>
<div class="t " style="right:289px;top:524px;">SSD</div>
<div class="t " style="right:289px;top:538px;">Weight</div>
<div class="t " style="right:289px;top:552px;">(kg)</div>
<div class="t " style="right:249px;top:524px;">Batch</div>
<div class="t " style="right:249px;top:538px;">Weight</div>
<div class="t " style="right:249px;top:552px;">(kg)</div>
<div class="t " style="right:205px;top:524px;">Total</div>
<div class="t " style="right:205px;top:538px;">Cost</div>
<div class="t " style="right:205px;top:552px;">($)</div>
<div class="l" style="left:7px;top:569px;width:644px;height:85px;background:#c0c0c0;"></div>
<div class="l" style="left:7px;top:569px;width:16px;height:16px;background:#ffffe1;"></div>
<div class="l" style="left:24px;top:569px;width:72px;height:16px;background:#ffffe1;"></div>
<div class="t " style="left:26.7px;top:571px;letter-spacing:-1.05px;">NCEMGP</div>
<div class="l" style="left:97px;top:569px;width:132px;height:16px;background:#ffffe1;"></div>
<div class="t " style="left:99.7px;top:571px;letter-spacing:-0.51px;">NCEMGP (General</div>
<div class="l" style="left:230px;top:569px;width:79px;height:16px;background:#ffffe1;"></div>
<div class="t " style="left:232.7px;top:571px;letter-spacing:-0.37px;">Cement</div>
<div class="l" style="left:310px;top:569px;width:32px;height:16px;background:#ffffe1;"></div>
<div class="t " style="right:513.9px;top:571px;">-</div>
<div class="l" style="left:343px;top:569px;width:32px;height:16px;background:#ffffe1;"></div>
<div class="t " style="right:480.7px;top:571px;">-</div>
<div class="l" style="left:376px;top:569px;width:42px;height:16px;background:#ffffe1;"></div>
<div class="t " style="right:438.2px;top:571px;">3120</div>
<div class="l" style="left:419px;top:569px;width:42px;height:16px;background:#ffffe1;"></div>
<div class="t " style="right:394.6px;top:571px;">93</div>
<div class="l" style="left:462px;top:569px;width:32px;height:16px;background:#ffffe1;"></div>
<div class="t " style="right:361.7px;top:571px;">n/a</div>
<div class="l" style="left:495px;top:569px;width:32px;height:16px;background:#ffffe1;"></div>
<div class="t " style="right:329px;top:571px;">n/a</div>
<div class="l" style="left:528px;top:569px;width:39px;height:16px;background:#fff;"></div>
<div class="t ser" style="right:289px;top:571px;">290</div>
<div class="l" style="left:568px;top:569px;width:39px;height:16px;background:#ffffe1;"></div>
<div class="t " style="right:249.20000000000005px;top:571px;">290</div>
<div class="l" style="left:608px;top:569px;width:43px;height:16px;background:#ffffe1;"></div>
<div class="t " style="right:205.29999999999995px;top:571px;">n/a</div>
<div class="l" style="left:7px;top:586px;width:16px;height:16px;background:#ffffe1;"></div>
<div class="l" style="left:8px;top:587px;width:14px;height:14px;background:#fff;border:1px solid #b4b4b4;"></div>
<div class="l" style="left:24px;top:586px;width:72px;height:16px;background:#7fffd4;"></div>
<div class="t " style="left:26.7px;top:588px;letter-spacing:-0.31px;">NAGG20</div>
<div class="l" style="left:97px;top:586px;width:132px;height:16px;background:#ffffe1;"></div>
<div class="t " style="left:99.7px;top:588px;letter-spacing:-0.36px;">NAGG20 (20mm</div>
<div class="l" style="left:230px;top:586px;width:79px;height:16px;background:#ffffe1;"></div>
<div class="t " style="left:232.7px;top:588px;letter-spacing:0.06px;">Aggregate</div>
<div class="l" style="left:310px;top:586px;width:32px;height:16px;background:#ffffe1;"></div>
<div class="t " style="right:513.9px;top:588px;">2.0</div>
<div class="l" style="left:343px;top:586px;width:32px;height:16px;background:#ffffe1;"></div>
<div class="t " style="right:480.7px;top:588px;">1.5</div>
<div class="l" style="left:376px;top:586px;width:42px;height:16px;background:#ffffe1;"></div>
<div class="t " style="right:438.2px;top:588px;">2660</div>
<div class="l" style="left:419px;top:586px;width:42px;height:16px;background:#ffffe1;"></div>
<div class="t " style="right:394.6px;top:588px;">271</div>
<div class="l" style="left:462px;top:586px;width:32px;height:16px;background:#ffffe1;"></div>
<div class="t " style="right:361.7px;top:588px;">n/a</div>
<div class="l" style="left:495px;top:586px;width:32px;height:16px;background:#fff;"></div>
<div class="t " style="right:329px;top:588px;">-</div>
<div class="l" style="left:528px;top:586px;width:39px;height:16px;background:#fff;"></div>
<div class="t ser" style="right:289px;top:588px;">721</div>
<div class="l" style="left:568px;top:586px;width:39px;height:16px;background:#ffffe1;"></div>
<div class="t " style="right:249.20000000000005px;top:588px;">725</div>
<div class="l" style="left:608px;top:586px;width:43px;height:16px;background:#ffffe1;"></div>
<div class="t " style="right:205.29999999999995px;top:588px;">n/a</div>
<div class="l" style="left:7px;top:603px;width:16px;height:16px;background:#ffffe1;"></div>
<div class="l" style="left:8px;top:604px;width:14px;height:14px;background:#fff;border:1px solid #b4b4b4;"></div>
<div class="l" style="left:24px;top:603px;width:72px;height:16px;background:#8a2be2;"></div>
<div class="t " style="left:26.7px;top:605px;letter-spacing:-0.31px;">NAGG07</div>
<div class="l" style="left:97px;top:603px;width:132px;height:16px;background:#ffffe1;"></div>
<div class="t " style="left:99.7px;top:605px;letter-spacing:-0.41px;">NAGG07 (7mm</div>
<div class="l" style="left:230px;top:603px;width:79px;height:16px;background:#ffffe1;"></div>
<div class="t " style="left:232.7px;top:605px;letter-spacing:0.06px;">Aggregate</div>
<div class="l" style="left:310px;top:603px;width:32px;height:16px;background:#ffffe1;"></div>
<div class="t " style="right:513.9px;top:605px;">2.1</div>
<div class="l" style="left:343px;top:603px;width:32px;height:16px;background:#ffffe1;"></div>
<div class="t " style="right:480.7px;top:605px;">1.5</div>
<div class="l" style="left:376px;top:603px;width:42px;height:16px;background:#ffffe1;"></div>
<div class="t " style="right:438.2px;top:605px;">1330</div>
<div class="l" style="left:419px;top:603px;width:42px;height:16px;background:#ffffe1;"></div>
<div class="t " style="right:394.6px;top:605px;">105</div>
<div class="l" style="left:462px;top:603px;width:32px;height:16px;background:#ffffe1;"></div>
<div class="t " style="right:361.7px;top:605px;">n/a</div>
<div class="l" style="left:495px;top:603px;width:32px;height:16px;background:#fff;"></div>
<div class="t " style="right:329px;top:605px;">-</div>
<div class="l" style="left:528px;top:603px;width:39px;height:16px;background:#fff;"></div>
<div class="t ser" style="right:289px;top:605px;">140</div>
<div class="l" style="left:568px;top:603px;width:39px;height:16px;background:#ffffe1;"></div>
<div class="t " style="right:249.20000000000005px;top:605px;">141</div>
<div class="l" style="left:608px;top:603px;width:43px;height:16px;background:#ffffe1;"></div>
<div class="t " style="right:205.29999999999995px;top:605px;">n/a</div>
<div class="l" style="left:7px;top:620px;width:16px;height:16px;background:#ffffe1;"></div>
<div class="l" style="left:8px;top:621px;width:14px;height:14px;background:#fff;border:1px solid #b4b4b4;"></div>
<div class="l" style="left:24px;top:620px;width:72px;height:16px;background:#deb887;"></div>
<div class="t " style="left:26.7px;top:622px;letter-spacing:-0.74px;">NCSSND</div>
<div class="l" style="left:97px;top:620px;width:132px;height:16px;background:#ffffe1;"></div>
<div class="t " style="left:99.7px;top:622px;letter-spacing:-0.32px;">NCSSND (Coarse Sand)</div>
<div class="l" style="left:230px;top:620px;width:79px;height:16px;background:#ffffe1;"></div>
<div class="t " style="left:232.7px;top:622px;letter-spacing:0.02px;">Sand</div>
<div class="l" style="left:310px;top:620px;width:32px;height:16px;background:#ffffe1;"></div>
<div class="t " style="right:513.9px;top:622px;">6.0</div>
<div class="l" style="left:343px;top:620px;width:32px;height:16px;background:#ffffe1;"></div>
<div class="t " style="right:480.7px;top:622px;">1.8</div>
<div class="l" style="left:376px;top:620px;width:42px;height:16px;background:#ffffe1;"></div>
<div class="t " style="right:438.2px;top:622px;">2520</div>
<div class="l" style="left:419px;top:620px;width:42px;height:16px;background:#ffffe1;"></div>
<div class="t " style="right:394.6px;top:622px;">87</div>
<div class="l" style="left:462px;top:620px;width:32px;height:16px;background:#ffffe1;"></div>
<div class="t " style="right:361.7px;top:622px;">n/a</div>
<div class="l" style="left:495px;top:620px;width:32px;height:16px;background:#fff;"></div>
<div class="t " style="right:329px;top:622px;">-</div>
<div class="l" style="left:528px;top:620px;width:39px;height:16px;background:#fff;"></div>
<div class="t ser" style="right:289px;top:622px;">220</div>
<div class="l" style="left:568px;top:620px;width:39px;height:16px;background:#ffffe1;"></div>
<div class="t " style="right:249.20000000000005px;top:622px;">229</div>
<div class="l" style="left:608px;top:620px;width:43px;height:16px;background:#ffffe1;"></div>
<div class="t " style="right:205.29999999999995px;top:622px;">n/a</div>
<div class="l" style="left:7px;top:637px;width:16px;height:16px;background:#ffffe1;"></div>
<div class="l" style="left:8px;top:638px;width:14px;height:14px;background:#fff;border:1px solid #b4b4b4;"></div>
<div class="l" style="left:24px;top:637px;width:72px;height:16px;background:#7fff00;"></div>
<div class="t " style="left:26.7px;top:639px;letter-spacing:-0.90px;">NFINESND</div>
<div class="l" style="left:97px;top:637px;width:132px;height:16px;background:#ffffe1;"></div>
<div class="t " style="left:99.7px;top:639px;letter-spacing:-0.49px;">NFINESND (Fine Sand)</div>
<div class="l" style="left:230px;top:637px;width:79px;height:16px;background:#ffffe1;"></div>
<div class="t " style="left:232.7px;top:639px;letter-spacing:0.02px;">Sand</div>
<div class="l" style="left:310px;top:637px;width:32px;height:16px;background:#ffffe1;"></div>
<div class="t " style="right:513.9px;top:639px;">3.5</div>
<div class="l" style="left:343px;top:637px;width:32px;height:16px;background:#ffffe1;"></div>
<div class="t " style="right:480.7px;top:639px;">0.5</div>
<div class="l" style="left:376px;top:637px;width:42px;height:16px;background:#ffffe1;"></div>
<div class="t " style="right:438.2px;top:639px;">2600</div>
<div class="l" style="left:419px;top:637px;width:42px;height:16px;background:#ffffe1;"></div>
<div class="t " style="right:394.6px;top:639px;">235</div>
<div class="l" style="left:462px;top:637px;width:32px;height:16px;background:#ffffe1;"></div>
<div class="t " style="right:361.7px;top:639px;">n/a</div>
<div class="l" style="left:495px;top:637px;width:32px;height:16px;background:#fff;"></div>
<div class="t " style="right:329px;top:639px;">-</div>
<div class="l" style="left:528px;top:637px;width:39px;height:16px;background:#fff;"></div>
<div class="t ser" style="right:289px;top:639px;">612</div>
<div class="l" style="left:568px;top:637px;width:39px;height:16px;background:#ffffe1;"></div>
<div class="t " style="right:249.20000000000005px;top:639px;">630</div>
<div class="l" style="left:608px;top:637px;width:43px;height:16px;background:#ffffe1;"></div>
<div class="t " style="right:205.29999999999995px;top:639px;">n/a</div>
<div class="l" style="left:651px;top:522px;width:1px;height:132px;background:#000;"></div>
<div class="l" style="left:7px;top:653px;width:645px;height:1px;background:#000;"></div>
<div class="l" style="left:823px;top:535px;width:1px;height:1px;background:#808080;"></div>
</div></body></html>
